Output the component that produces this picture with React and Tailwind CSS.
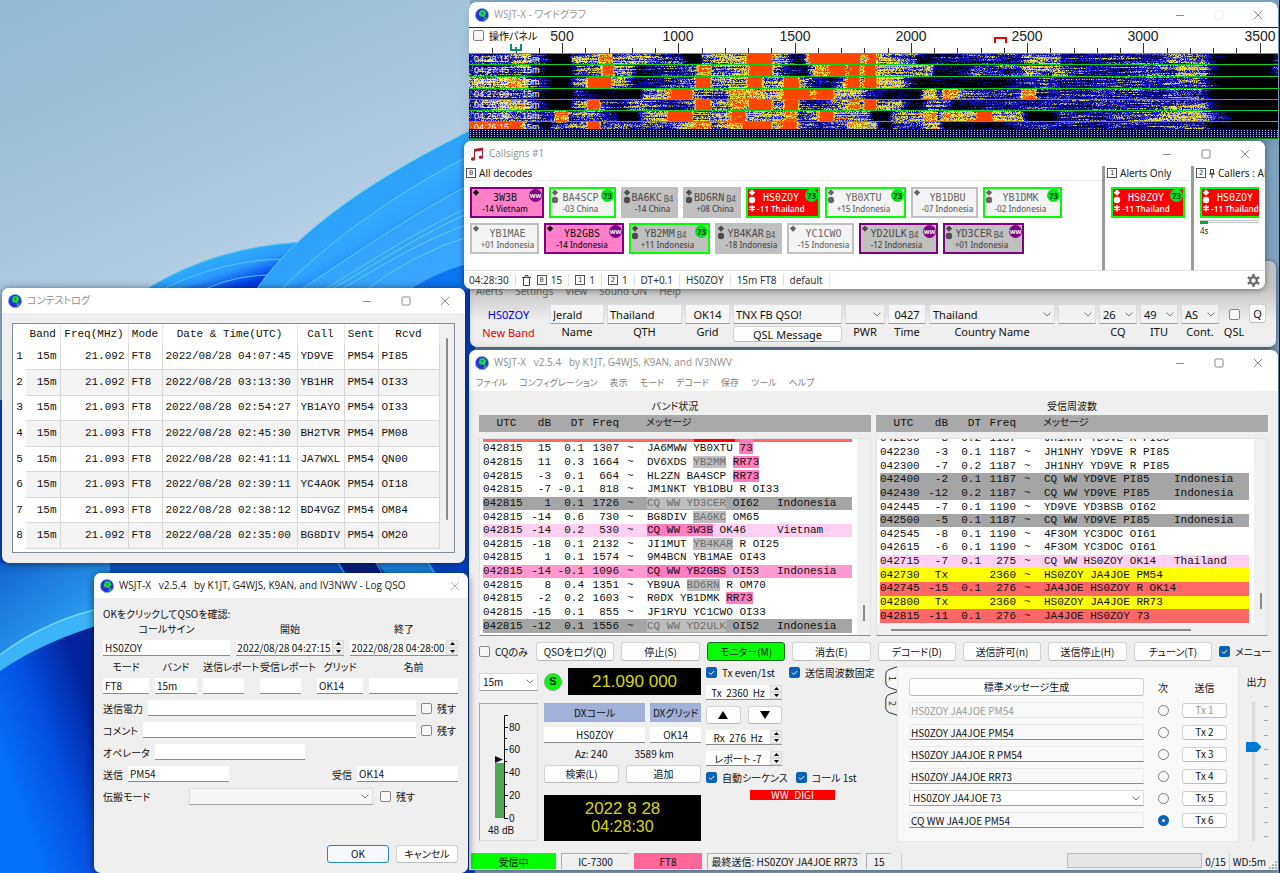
import React, { useId } from "react";

/* ---------- shared bits ---------- */

const Globe = () => (
  <svg className="size-[14px] shrink-0" viewBox="0 0 14 14" aria-hidden="true">
    <circle cx="7" cy="7" r="6.6" fill="#2a2ae8" />
    <circle cx="7" cy="7" r="6.6" fill="none" stroke="#7fa8f0" strokeWidth="0.8" />
    <path d="M4.6 3.2 6.5 2 9.8 2.6 11.4 5 10.4 7 9 9.4 7 8.4 5 8.6 3.8 6.4Z" fill="#18d83a" />
    <path d="M9.4 9.8 11.8 9 10.4 11.8 8.4 12.6Z" fill="#18d83a" />
    <path d="M1.6 7.4 3 9.6 4.4 10.8 3.2 11.2Z" fill="#0b6d6b" />
    <path d="M6.4 4.4 7.8 4 8.2 5.6 7 6.2Z" fill="#0b6d6b" />
  </svg>
);

const WindowButtons = ({ only, dimMax }) => (
  <div className="ml-auto flex self-stretch pr-px text-[#8c8c8c]">
    {!only && (
      <>
        <button aria-label="Minimize" className="flex w-[39px] items-center justify-center">
          <svg className="size-[10px]" viewBox="0 0 10 10">
            <path d="M1 5.5h8" stroke="currentColor" />
          </svg>
        </button>
        <button aria-label="Maximize" className="flex w-[39px] items-center justify-center">
          <svg className={dimMax ? "size-[10px] text-[#ececec]" : "size-[10px]"} viewBox="0 0 10 10">
            <rect x="1" y="1" width="8" height="8" rx="1" fill="none" stroke="currentColor" />
          </svg>
        </button>
      </>
    )}
    <button
      aria-label="Close"
      className={only ? "flex w-[24px] items-center justify-center text-[#b5b5b5]" : "flex w-[39px] items-center justify-center"}
    >
      <svg className="size-[10px]" viewBox="0 0 10 10">
        <path d="M.8.8l8.4 8.4M9.2.8.8 9.2" stroke="currentColor" fill="none" />
      </svg>
    </button>
  </div>
);

const TitleBar = ({ title, className, icon, ...rest }) => (
  <div
    className={`flex items-center gap-[5px] bg-white pl-[6px] font-['Open_Sans','Noto_Sans_CJK_JP',sans-serif] text-[10px] whitespace-pre ${className}`}
  >
    {icon || <Globe />}
    <span>{title}</span>
    <WindowButtons {...rest} />
  </div>
);

const Chevron = () => (
  <svg className="pointer-events-none absolute inset-y-0 right-[4px] my-auto h-[5px] w-[8px]" viewBox="0 0 8 5" fill="none">
    <path d="M.6.6 4 4 7.4.6" stroke="#777" />
  </svg>
);

const Select = ({ value, label, className, id }) => (
  <div className={`relative ${className}`}>
    <select
      id={id}
      aria-label={label}
      className="size-full appearance-none border border-[#dcdcdc] border-b-[#a0a0a0] bg-inherit pr-3 pl-[3px] leading-none"
    >
      <option>{value}</option>
    </select>
    <Chevron />
  </div>
);

const Check = ({ label, checked, className = "" }) => (
  <label className={`flex items-center gap-[5px] whitespace-nowrap ${className}`}>
    <span className="relative flex size-[11px] shrink-0">
      <input
        type="checkbox"
        aria-label={label || "QSL"}
        defaultChecked={checked}
        className="size-[11px] appearance-none rounded-[2px] border border-[#868686] bg-[#f7f7f7] checked:border-[#0a62b8] checked:bg-[#0a62b8]"
      />
      {checked && (
        <svg className="pointer-events-none absolute inset-0 size-[11px]" viewBox="0 0 11 11" fill="none">
          <path d="M3 5.6 4.8 7.4 8.2 4" stroke="#fff" />
        </svg>
      )}
    </span>
    {label}
  </label>
);

const SpinArrows = () => (
  <span className="flex w-[12px] shrink-0 flex-col border-b border-[#9a9a9a] bg-[#ededed]">
    <button aria-label="Up" className="flex flex-1 items-center justify-center border border-[#dadada]">
      <svg className="h-[3px] w-[5px]" viewBox="0 0 5 3">
        <path d="M0 3 2.5 0 5 3Z" />
      </svg>
    </button>
    <button aria-label="Down" className="flex flex-1 items-center justify-center border border-[#dadada]">
      <svg className="h-[3px] w-[5px]" viewBox="0 0 5 3">
        <path d="M0 0 2.5 3 5 0Z" />
      </svg>
    </button>
  </span>
);

const Spin = ({ value, label, className = "" }) => (
  <div className={`flex ${className}`}>
    <input
      aria-label={label}
      defaultValue={value}
      className="min-w-0 flex-1 border-b border-[#8a8a8a] bg-white text-center leading-none whitespace-pre"
    />
    <SpinArrows />
  </div>
);

const Btn = ({ children, className = "" }) => (
  <button
    className={`flex items-center justify-center rounded-[3px] border border-[#d2d2d2] border-b-[#bbb] bg-[#fdfdfd] leading-none whitespace-nowrap ${className}`}
  >
    {children}
  </button>
);

/* ---------- wallpaper ---------- */

const Wallpaper = () => (
  <svg className="absolute inset-0 size-full" viewBox="0 0 1280 873" preserveAspectRatio="xMinYMin slice" aria-hidden="true">
    <defs>
      <linearGradient id="sky" x1="0" y1="0" x2="0.25" y2="0.4">
        <stop offset="0" stopColor="#92b8d2" />
        <stop offset="0.5" stopColor="#a6c6dd" />
        <stop offset="1" stopColor="#c3d6e9" />
      </linearGradient>
      <linearGradient id="petal" x1="300" y1="150" x2="400" y2="290" gradientUnits="userSpaceOnUse">
        <stop offset="0" stopColor="#22a0f5" />
        <stop offset="1" stopColor="#3aa5ff" />
      </linearGradient>
      <linearGradient id="fold" x1="380" y1="190" x2="415" y2="250" gradientUnits="userSpaceOnUse">
        <stop offset="0" stopColor="#3aadff" />
        <stop offset="0.5" stopColor="#2fa2fe" />
        <stop offset="1" stopColor="#1370f3" />
      </linearGradient>
      <linearGradient id="back" x1="240" y1="245" x2="255" y2="290" gradientUnits="userSpaceOnUse">
        <stop offset="0" stopColor="#2fb2f8" />
        <stop offset="0.45" stopColor="#2a98fc" />
        <stop offset="0.8" stopColor="#0440ea" />
        <stop offset="1" stopColor="#0433d8" />
      </linearGradient>
      <linearGradient id="deep" x1="0" y1="760" x2="110" y2="720" gradientUnits="userSpaceOnUse">
        <stop offset="0" stopColor="#0572fb" />
        <stop offset="0.45" stopColor="#0350e0" />
        <stop offset="0.9" stopColor="#02239c" />
      </linearGradient>
      <linearGradient id="leaf" x1="0" y1="565" x2="60" y2="640" gradientUnits="userSpaceOnUse">
        <stop offset="0" stopColor="#1266cf" />
        <stop offset="1" stopColor="#2b9df2" />
      </linearGradient>
      <linearGradient id="steel" x1="0" y1="0" x2="0" y2="1">
        <stop offset="0" stopColor="#7ba2bf" />
        <stop offset="1" stopColor="#7f9db8" />
      </linearGradient>
    </defs>
    <rect width="1280" height="873" fill="url(#sky)" />
    <rect x="470" width="810" height="873" fill="url(#steel)" />
    <path d="M145 290Q215 246 305 242L330 290Z" fill="url(#back)" />
    <path d="M145 290Q215 246 305 242M165 288Q225 259 288 259M207 288Q240 274 275 275" fill="none" stroke="#54c6fb" />
    <path d="M256 290C300 226 380 175 475 128V290Z" fill="url(#petal)" />
    <path d="M281 290C330 240 400 190 475 153V290Z" fill="url(#fold)" />
    <path d="M300 290C340 264 410 215 475 182V290Z" fill="url(#petal)" />
    <path d="M410 290Q435 272 475 262V290Z" fill="#0c74ee" />
    <path
      d="M256 290C300 226 380 175 475 128M281 290C330 240 400 190 475 153M300 290C340 264 410 215 475 182M324 290C370 262 400 240 475 204M330 290C380 262 410 240 475 210M340 290C385 264 425 238 475 222M366 290Q410 255 475 234"
      fill="none"
      stroke="#58d4fb"
    />
    <rect y="290" width="475" height="583" fill="#0546cf" />
    <rect y="290" width="6" height="110" fill="#9fc0de" />
    <path d="M0 563H110V620L0 665Z" fill="url(#leaf)" />
    <path d="M0 655Q45 620 110 606V873H0Z" fill="#3bb4fb" />
    <path d="M0 671Q45 640 110 622V873H0Z" fill="url(#deep)" />
    <path d="M0 655Q45 620 110 606" fill="none" stroke="#6fdcff" strokeWidth="1.5" />
    <path d="M110 563H340L350 580H110Z" fill="#0d55c8" />
    <path d="M340 563H376L390 580H350Z" fill="#0a1f86" />
    <path d="M376 563H430L440 580H392Z" fill="#1c86ea" />
    <path d="M338 563 346 576M376 563 384 576M428 563 436 576" stroke="#5cc4fa" />
    <path d="M1279.5 0V873" stroke="#0b0f14" />
  </svg>
);

/* ---------- wide graph ---------- */

// Signal strength along x for each 15 s period, 0 = noise floor, 1 = saturated
const BANDS = [
  { y0: 26, y1: 36, t: "04:28:15", p: [0,.4,38,.42,45,.58,56,.58,62,.4,76,.3,82,.04,100,.04,103,.5,128,.55,131,.82,142,.82,144,.55,180,.56,190,.42,212,.36,218,.1,230,.1,233,.48,270,.62,277,.78,279,1,301,1,304,.62,318,.46,325,.2,333,.2,340,.86,342,.97,390,.95,393,.66,401,.93,406,.93,408,.62,445,.48,450,.2,480,.3,500,.38,550,.38,556,.52,590,.52,592,.36,690,.38,705,.48,735,.48,745,.2,760,.02,800,.02,806,.35] },
  { y0: 37, y1: 48, t: "04:27:45", p: [0,.4,38,.42,45,.52,56,.52,62,.4,74,.2,80,.04,100,.04,106,.46,130,.54,134,.88,143,.88,146,.56,160,.6,170,.2,190,.33,225,.46,230,.82,240,.82,243,.52,278,.62,281,.95,302,.95,305,.56,320,.3,335,.2,344,.56,347,.8,358,.8,362,.96,375,.96,378,.62,380,.9,389,.9,392,.54,396,.95,405,.95,408,.62,462,.58,466,.15,490,.2,510,.38,550,.4,556,.56,590,.56,600,.4,640,.4,700,.46,710,.56,735,.56,742,.3,755,.02,800,.02,806,.3] },
  { y0: 49, y1: 60, t: "04:27:15", p: [0,.6,30,.62,40,.7,55,.7,60,.4,78,.3,84,.06,100,.06,104,.44,116,.54,119,.95,141,.95,144,.6,156,.54,166,.2,190,.34,224,.5,227,.97,240,.97,243,.54,276,.58,279,1,291,1,295,.54,313,.56,315,.98,328,.98,331,.54,345,.34,360,.22,374,.54,379,.94,389,.94,392,.46,396,.98,406,.98,408,.62,430,.66,440,.38,452,.12,530,.14,550,.38,600,.4,690,.42,705,.52,730,.52,745,.2,756,.02,806,.02] },
  { y0: 61, y1: 71, t: "04:27:00", p: [0,.4,36,.4,44,.48,60,.4,72,.15,80,.04,100,.04,108,.34,130,.16,170,.06,174,.46,196,.62,204,.96,222,.96,225,.6,255,.4,263,.74,285,.74,300,.54,313,.7,315,.98,338,1,341,.76,350,.92,363,.98,366,.62,390,.56,402,.3,420,.08,450,.08,455,.7,465,.7,470,.38,476,.84,485,.8,492,.5,520,.34,550,.38,554,.84,565,.84,568,.38,690,.38,705,.47,730,.47,745,.1,755,.02,806,.02] },
  { y0: 72, y1: 82, t: "04:26:45", p: [0,.42,40,.6,55,.6,60,.4,76,.2,82,.04,100,.04,104,.42,116,.52,119,.9,129,.9,132,.48,150,.28,168,.54,180,.46,200,.35,224,.5,227,.98,240,.98,243,.5,260,.54,263,.84,272,.84,278,.66,280,.98,301,.98,304,.54,313,.56,316,.96,328,.96,331,.46,350,.3,376,.54,380,.84,389,.84,392,.46,396,.95,406,.95,408,.56,430,.56,440,.14,452,.1,458,.46,480,.4,485,.14,530,.28,560,.38,690,.4,705,.5,730,.5,742,.2,756,.02,806,.02] },
  { y0: 83, y1: 93, t: "04:26:30", p: [0,.4,40,.48,60,.42,84,.4,87,.86,98,.86,100,.42,120,.5,146,.3,150,.04,166,.04,174,.5,196,.62,199,.95,222,.95,225,.56,255,.5,263,.9,275,.9,278,.58,313,.56,317,.82,325,.82,330,.38,346,.58,352,.98,363,.98,366,.62,398,.56,405,.08,418,.08,424,.5,452,.54,455,.8,466,.8,469,.38,476,.8,482,.64,506,.68,509,1,521,1,524,.64,552,.56,560,.06,582,.06,592,.38,650,.44,690,.55,735,.6,748,.35,765,.02,806,.02] },
  { y0: 94, y1: 101, t: "04:26:15", p: [0,.88,50,.9,56,.5,62,.3,78,.08,84,.46,116,.54,119,.98,129,.98,132,.46,160,.54,200,.4,227,.82,240,.82,243,.46,263,.84,272,.84,279,.96,301,.96,304,.54,316,.95,326,.95,330,.46,350,.3,376,.54,380,.82,389,.78,396,.8,406,.66,410,.3,420,.1,425,.46,452,.5,458,.62,468,.62,475,.1,530,.14,545,.34,690,.38,705,.46,730,.46,745,.1,806,.02] },
];

const SHADES = ["#00003c", "#0a0a8c", "#1414dc", "#5a5ab4", "#b4b450", "#e6e63c", "#ffa014", "#ff4600"];

const shadeOf = (v) => {
  if (v < 0.16) return -1;
  if (v < 0.27) return 0;
  if (v < 0.38) return 1;
  if (v < 0.48) return 2;
  if (v < 0.55) return 3;
  if (v < 0.63) return 4;
  if (v < 0.78) return 5;
  if (v < 0.84) return 6;
  return 7;
};

const buildWaterfall = () => {
  let seed = 90210;
  const rnd = () => {
    seed = (seed * 1664525 + 1013904223) >>> 0;
    return seed / 4294967296;
  };
  const paths = SHADES.map(() => []);
  BANDS.forEach(({ y0, y1, p }) => {
    for (let y = y0; y < y1; y++) {
      let seg = 0;
      let from = 0;
      let to = 0;
      let run = -1;
      let start = 0;
      for (let x = 0; x <= 812; x++) {
        while (seg + 3 < p.length - 1 && p[seg + 2] < x) seg += 2;
        const span = p[seg + 2] - p[seg] || 1;
        const k = Math.min(1, (x - p[seg]) / span);
        const base = p[seg + 1] + (p[seg + 3] - p[seg + 1]) * k;
        if (x % 18 === 0) {
          from = to;
          to = (rnd() - 0.5) * 0.36;
        }
        const streak = from + ((to - from) * (x % 18)) / 18;
        const soft = base > 0.86 ? 0.3 : base < 0.08 ? 0.5 : 1;
        const s = x === 812 ? -2 : shadeOf(base + (streak + (rnd() - 0.5) * 0.32) * soft);
        if (s !== run) {
          if (run >= 0) paths[run].push(`M${start} ${y + 0.5}h${x - start}`);
          run = s;
          start = x;
        }
      }
    }
  });
  return paths.map((d) => d.join(""));
};

const WATERFALL = buildWaterfall();
const hz = (f) => Math.round(93 + (f - 500) * 0.2325);
const TICKS = Array.from({ length: 34 }, (_, i) => 200 + i * 100);

const WideGraph = () => (
  <section className="absolute top-[2px] right-[2px] left-[469px] overflow-hidden rounded-t-[7px] bg-black shadow-lg">
    <TitleBar title="WSJT-X - ワイドグラフ" dimMax className="h-[25px] text-[#9a9a9a]" />
    <div className="relative border-t border-[#222]">
      <svg className="block h-[111px] w-full" shapeRendering="crispEdges">
        <defs>
          <pattern id="dots" width="3" height="2" patternUnits="userSpaceOnUse">
            <rect width="3" height="2" fill="#0a0a50" />
            <rect x="1" width="1" height="1" fill="#c4c4d8" />
          </pattern>
        </defs>
        <rect width="100%" height="25" fill="#fff" />
        {TICKS.map((f) => (
          <path key={f} d={`M${hz(f) + 0.5} ${f % 500 ? 20 : 15}V25`} stroke="#333" />
        ))}
        {[500, 1000, 1500, 2000, 2500, 3000, 3500].map((f) => (
          <text
            key={f}
            x={hz(f)}
            y="13"
            textAnchor="middle"
            fontSize="14"
            fill="#222"
            className="font-['Liberation_Sans',sans-serif]"
          >
            {f}
          </text>
        ))}
        <path d="M42 16v6h10v-6M47 22v-3" fill="none" stroke="#0b9068" strokeWidth="2" />
        <path d="M526 15v-5h11v5" fill="none" stroke="#f00000" strokeWidth="2" />
        {WATERFALL.map((d, i) => (
          <path key={i} d={d} stroke={SHADES[i]} />
        ))}
        {BANDS.map((b) => (
          <path key={b.t} d={`M0 ${b.y0 - 0.5}H1280`} stroke="#0fd21e" />
        ))}
        <g fontSize="9" fill="#fff" className="font-['Liberation_Sans',sans-serif]">
          {BANDS.map((b) => (
            <g key={b.t}>
              <text x="5" y={b.y0 + 8}>{b.t}</text>
              <text x="53" y={b.y0 + 8}>15m</text>
            </g>
          ))}
        </g>
        <rect y="101" width="100%" height="10" fill="url(#dots)" />
        <path d="M0 110.5H1280" stroke="#0a8a14" />
      </svg>
      <Check label="操作パネル" className="absolute top-0 left-[4px] h-[14px] text-[10px]" />
    </div>
  </section>
);

/* ---------- callsigns ---------- */

const CHIP_STYLES = {
  plain: "border-[#c0c0c0] bg-[#f4f4f4] text-[#666]",
  green: "border-[#00ff00] bg-[#f4f4f4] text-[#666]",
  gray: "border-[#c0c0c0] bg-[#c0c0c0] text-[#4c4c4c]",
  grayGreen: "border-[#00ff00] bg-[#c0c0c0] text-[#4c4c4c]",
  grayPurple: "border-[#800080] bg-[#c0c0c0] text-[#4c4c4c]",
  pink: "border-[#800080] bg-[#ff80c8] text-[#111]",
  red: "border-[#00ff00] bg-[#ff0000] text-white",
};

const ROW_1 = [
  { call: "3W3B", info: "-14 Vietnam", w: "w-[74px]", kind: "pink", badge: "WW", marks: 1 },
  { call: "BA4SCP", info: "-03 China", w: "w-[67px]", kind: "green", badge: "73", marks: 2 },
  { call: "BA6KC", b4: true, info: "-14 China", w: "w-[57px]", kind: "gray", marks: 2 },
  { call: "BD6RN", b4: true, info: "+08 China", w: "w-[58px]", kind: "gray", marks: 2 },
  { call: "HS0ZOY", info: "-11 Thailand", w: "w-[74px]", kind: "red", badge: "73", marks: 3 },
  { call: "YB0XTU", info: "+15 Indonesia", w: "w-[81px]", kind: "green", badge: "73", marks: 2 },
  { call: "YB1DBU", info: "-07 Indonesia", w: "w-[67px]", kind: "plain", marks: 1 },
  { call: "YB1DMK", info: "-02 Indonesia", w: "w-[79px]", kind: "green", badge: "73", marks: 2 },
];

const ROW_2 = [
  { call: "YB1MAE", info: "+01 Indonesia", w: "w-[69px]", kind: "plain", marks: 1 },
  { call: "YB2GBS", info: "-14 Indonesia", w: "w-[80px]", kind: "pink", badge: "WW", marks: 1 },
  { call: "YB2MM", b4: true, info: "+11 Indonesia", w: "w-[81px]", kind: "grayGreen", badge: "73", marks: 2 },
  { call: "YB4KAR", b4: true, info: "-18 Indonesia", w: "w-[67px]", kind: "gray", marks: 2 },
  { call: "YC1CWO", info: "-15 Indonesia", w: "w-[67px]", kind: "plain", marks: 1 },
  { call: "YD2ULK", b4: true, info: "-12 Indonesia", w: "w-[79px]", kind: "grayPurple", badge: "WW", marks: 1 },
  { call: "YD3CER", b4: true, info: "+01 Indonesia", w: "w-[81px]", kind: "grayPurple", badge: "WW", marks: 2 },
];

const Chip = ({ call, info, w, kind, badge, marks, b4, hideBadge }) => (
  <button
    className={`relative flex h-[31px] shrink-0 flex-col items-center justify-center gap-[2px] border-2 leading-none whitespace-nowrap ${
      badge ? "pr-[4px]" : "pl-[6px]"
    } ${w} ${CHIP_STYLES[kind]}`}
  >
    <svg className="absolute top-0 left-0 h-[27px] w-[8px]" viewBox="0 0 8 27" fill="currentColor">
      <path d="M4 .4 7.2 3.6 4 6.8.8 3.6Z" />
      {marks > 1 && <circle cx="4" cy="11" r="3.2" />}
      {marks > 2 && (
        <path d="M4 16v6.400M1.2 17.600l5.600 3.200M6.800 17.600l-5.600 3.200" stroke="currentColor" strokeWidth="1.6" />
      )}
    </svg>
    <span className={badge && b4 ? "flex items-end gap-[2px] pr-[4px]" : "flex items-end gap-[2px]"}>
      <span className="font-['DejaVu_Sans_Mono',monospace] text-[10px]">{call}</span>
      {b4 && <span className="font-['Noto_Sans',sans-serif] text-[8px]">B4</span>}
    </span>
    <span className={`font-['Noto_Sans',sans-serif] text-[8px] ${kind === "red" ? "font-semibold" : "font-medium"}`}>
      {info}
    </span>
    {badge && !hideBadge && (
      <span
        className={`absolute top-0 right-0 flex size-[13px] items-center justify-center rounded-full font-['Noto_Sans',sans-serif] font-bold ${
          badge === "73" ? "bg-[#00e61e] text-[8px] text-[#053a05]" : "bg-[#800080] text-[6px] text-white"
        }`}
      >
        {badge}
      </span>
    )}
  </button>
);

const BoxedNum = ({ n }) => (
  <span className="flex size-[10px] shrink-0 items-center justify-center border border-[#555] font-['DejaVu_Sans_Mono',monospace] text-[7px] leading-none text-[#333]">
    {n}
  </span>
);

const PaneHead = ({ n, children }) => (
  <h2 className="flex h-[15px] items-center gap-[3px] border-b border-[#ececec] pl-[2px] whitespace-nowrap">
    <BoxedNum n={n} />
    {children}
  </h2>
);

const MusicNotes = () => (
  <svg className="size-[14px]" viewBox="0 0 14 14" fill="#b01c30">
    <path d="M4 2 13 .5V10H12V3.5L5 4.8V12H4Z" />
    <ellipse cx="3" cy="12" rx="2.2" ry="1.7" />
    <ellipse cx="11" cy="10.2" rx="2.2" ry="1.7" />
  </svg>
);

const Trash = () => (
  <svg className="h-[11px] w-[9px]" viewBox="0 0 9 11" fill="none" stroke="#444">
    <path d="M0 2.5h9M3 2V.5h3V2M1.5 3v7.5h6V3" />
  </svg>
);

const Gear = () => (
  <svg className="size-[13px]" viewBox="0 0 14 14" fill="none" stroke="#666">
    <circle cx="7" cy="7" r="3.6" strokeWidth="2.4" />
    <path d="M7 0v2.400M7 11.600V14M.9 3.500l2.100 1.200M11 9.300l2.100 1.200M.9 10.500 3 9.300M11 4.700l2.100-1.200" strokeWidth="2.6" />
  </svg>
);

const Stat = ({ n, children }) => (
  <span className="flex h-[12px] items-center gap-[4px] border-r border-[#dedede] pr-[6px]">
    {n !== undefined && <BoxedNum n={n} />}
    {children}
  </span>
);

const Callsigns = () => (
  <section className="absolute top-[141px] right-[15px] left-[464px] overflow-hidden rounded-[7px] bg-white shadow-[0_1px_6px_rgba(0,0,0,0.45)]">
    <TitleBar title="Callsigns #1" icon={<MusicNotes />} className="h-[25px] text-[#8f8f8f]" />
    <div className="flex h-[104px] font-['Noto_Sans',sans-serif] text-[10px] text-[#222]">
      <div className="min-w-0 flex-1">
        <PaneHead n="0">All decodes</PaneHead>
        <div className="flex flex-col gap-[5px] overflow-hidden py-[6px] pl-[6px]">
          <div className="flex gap-[5px]">
            {ROW_1.map((c) => (
              <Chip key={c.call} {...c} />
            ))}
          </div>
          <div className="flex gap-[5px]">
            {ROW_2.map((c) => (
              <Chip key={c.call} {...c} />
            ))}
          </div>
        </div>
      </div>
      <div className="w-[3px] bg-[#999]" />
      <div className="w-[86px]">
        <PaneHead n="1">Alerts Only</PaneHead>
        <div className="py-[6px] pl-[6px]">
          <Chip {...ROW_1[4]} />
        </div>
      </div>
      <div className="w-[3px] bg-[#999]" />
      <div className="w-[71px] overflow-hidden">
        <PaneHead n="2">
          <svg className="h-[9px] w-[6px] shrink-0" viewBox="0 0 6 9" fill="none" stroke="#333">
            <path d="M1.5.5h3v4h-3zM0 5h6M3 5v4" />
          </svg>
          Callers : Al
        </PaneHead>
        <div className="mr-[6px] overflow-hidden pt-[6px] pl-[6px]">
          <Chip {...ROW_1[4]} hideBadge />
          <div className="mt-[2px] h-[3px] border-y border-[#c8c8c8]">
            <div className="h-[3px] w-[8px] bg-[#10a030]" />
          </div>
          <span className="text-[8px] leading-none">4s</span>
        </div>
      </div>
    </div>
    <footer className="flex h-[19px] items-center gap-[6px] border-t border-[#e2e2e2] pr-[5px] pl-[5px] font-['Noto_Sans',sans-serif] text-[10px] text-[#333]">
      <Stat>04:28:30</Stat>
      <button aria-label="Clear">
        <Trash />
      </button>
      <Stat n="0">15</Stat>
      <Stat n="1">1</Stat>
      <Stat n="2">1</Stat>
      <Stat>DT+0.1</Stat>
      <Stat>HS0ZOY</Stat>
      <Stat>15m FT8</Stat>
      <Stat>default</Stat>
      <button aria-label="Settings" className="ml-auto">
        <Gear />
      </button>
    </footer>
  </section>
);

/* ---------- alert window (behind callsigns) ---------- */

const AlertField = ({ label, value, select, className, center }) => {
  const id = useId();
  return (
    <div className={`flex flex-col items-center gap-[2px] ${className}`}>
      {select ? (
        <Select id={id} value={value} label={label || "Prefix"} className="h-[20px] w-full bg-[#f2f2f2] text-[11px]" />
      ) : (
        <input
          id={id}
          defaultValue={value}
          aria-label={label || "Comment"}
          className={`h-[20px] w-full border border-[#dedede] border-b-[#999] bg-[#f6f6f6] px-[2px] ${center ? "text-center" : ""}`}
        />
      )}
      {label && (
        <label htmlFor={id} className="leading-none whitespace-nowrap">
          {label}
        </label>
      )}
    </div>
  );
};

const AlertWindow = () => (
  <section className="absolute top-[261px] right-[4px] left-[470px] rounded-[7px] bg-linear-to-b from-[#c4c4c4] from-30% to-[#efefef] to-70% pt-[23px] font-['Noto_Sans',sans-serif] text-[11px] text-[#111] shadow-[0_1px_5px_rgba(0,0,0,0.5)]">
    <nav className="flex gap-[12px] pl-[6px] text-[10px] leading-[14px] text-[#666]">
      {["Alerts", "Settings", "View", "Sound ON", "Help"].map((m) => (
        <button key={m}>{m}</button>
      ))}
    </nav>
    <div className="flex gap-[3px] pt-[6px] pr-[10px] pb-[5px] leading-none">
      <div className="flex w-[77px] flex-col items-center gap-[7px] pt-[5px]">
        <span className="text-[#0000ee]">HS0ZOY</span>
        <span className="whitespace-nowrap text-[#ee0000]">New Band</span>
      </div>
      <AlertField label="Name" value="Jerald" className="w-[54px]" />
      <AlertField label="QTH" value="Thailand" className="w-[75px]" />
      <AlertField label="Grid" value="OK14" center className="w-[45px]" />
      <div className="flex w-[109px] flex-col gap-[2px]">
        <AlertField value="TNX FB QSO!" />
        <Btn className="h-[16px]">QSL Message</Btn>
      </div>
      <AlertField label="PWR" value="" select className="w-[40px]" />
      <AlertField label="Time" value="0427" center className="w-[38px]" />
      <AlertField label="Country Name" value="Thailand" select className="min-w-0 flex-1" />
      <AlertField value="" select className="w-[38px]" />
      <AlertField label="CQ" value="26" select className="w-[38px]" />
      <AlertField label="ITU" value="49" select className="w-[38px]" />
      <AlertField label="Cont." value="AS" select className="w-[38px]" />
      <div className="flex w-[24px] flex-col items-center gap-[7px] pt-[5px]">
        <Check className="h-[10px]" />
        <span>QSL</span>
      </div>
      <Btn className="h-[19px] w-[17px]">Q</Btn>
    </div>
  </section>
);

/* ---------- contest log ---------- */

const LOG = [
  ["21.092", "2022/08/28 04:07:45", "YD9VE", "PI85"],
  ["21.092", "2022/08/28 03:13:30", "YB1HR", "OI33"],
  ["21.093", "2022/08/28 02:54:27", "YB1AYO", "OI33"],
  ["21.093", "2022/08/28 02:45:30", "BH2TVR", "PM08"],
  ["21.093", "2022/08/28 02:41:11", "JA7WXL", "QN00"],
  ["21.093", "2022/08/28 02:39:11", "YC4AOK", "OI18"],
  ["21.093", "2022/08/28 02:38:12", "BD4VGZ", "OM84"],
  ["21.092", "2022/08/28 02:35:00", "BG8DIV", "OM20"],
];

const ContestLog = () => (
  <section className="absolute top-[288px] left-[2px] w-[463px] overflow-hidden rounded-[7px] bg-[#efefef] shadow-[0_1px_8px_rgba(0,0,0,0.55)]">
    <TitleBar title="コンテストログ" className="h-[25px] text-[#8f8f8f]" />
    <div className="mx-[10px] mt-[10px] mb-[10px] flex h-[230px] overflow-hidden border border-[#828a94] bg-white">
      <table className="h-[225px] table-fixed self-start font-['Liberation_Mono',monospace] text-[11px] leading-none whitespace-nowrap text-[#111]">
        <colgroup>
          <col className="w-[13px]" />
          <col className="w-[34px]" />
          <col className="w-[68px]" />
          <col className="w-[34px]" />
          <col className="w-[135px]" />
          <col className="w-[47px]" />
          <col className="w-[34px]" />
          <col className="w-[61px]" />
        </colgroup>
        <thead>
          <tr className="h-[20px]">
            <th />
            {["Band", "Freq(MHz)", "Mode", "Date & Time(UTC)", "Call", "Sent", "Rcvd"].map((h) => (
              <th key={h} className="border-r border-[#e6e6e6] p-0 font-normal">
                {h}
              </th>
            ))}
          </tr>
        </thead>
        <tbody>
          {LOG.map(([freq, date, call, rcvd], i) => (
            <tr key={date} className="h-[25px] even:bg-[#f4f4f4]">
              <th className="bg-white p-0 text-center font-normal">{i + 1}</th>
              <td className="border-r border-b border-[#d8d8d8] pr-[3px] text-right">15m</td>
              <td className="border-r border-b border-[#d8d8d8] pr-[3px] text-right">{freq}</td>
              <td className="border-r border-b border-[#d8d8d8] pl-[3px]">FT8</td>
              <td className="border-r border-b border-[#d8d8d8] pl-[3px]">{date}</td>
              <td className="border-r border-b border-[#d8d8d8] pl-[3px]">{call}</td>
              <td className="border-r border-b border-[#d8d8d8] pl-[3px]">PM54</td>
              <td className="border-r border-b border-[#d8d8d8] pl-[3px]">{rcvd}</td>
            </tr>
          ))}
        </tbody>
      </table>
      <div className="flex flex-1 justify-center bg-[#f0f0f0] pt-[14px]">
        <div className="h-[182px] w-[2px] rounded-full bg-[#8a8a8a]" />
      </div>
    </div>
  </section>
);

/* ---------- log QSO dialog ---------- */

const BOX = "h-[16px] min-w-0 border-b border-[#8a8a8a] bg-white px-[2px] leading-none";

const Stacked = ({ label, value, className, inputClass = "w-full" }) => {
  const id = useId();
  return (
    <div className={`flex flex-col gap-[5px] ${className}`}>
      <label htmlFor={id} className="text-center leading-[12px] whitespace-nowrap">
        {label}
      </label>
      <input id={id} defaultValue={value} className={`${BOX} ${inputClass}`} />
    </div>
  );
};

const Inline = ({ label, value, className, children }) => {
  const id = useId();
  return (
    <div className="flex h-[16px] items-center gap-[5px]">
      <label htmlFor={id} className="whitespace-nowrap">
        {label}
      </label>
      <input id={id} defaultValue={value} className={`${BOX} ${className}`} />
      {children}
    </div>
  );
};

const LogQso = () => {
  const modeId = useId();
  return (
    <section className="absolute top-[573px] left-[94px] flex h-[300px] w-[374px] flex-col overflow-hidden rounded-[7px] bg-[#efefef] text-[10px] text-[#111] shadow-[0_1px_8px_rgba(0,0,0,0.6)]">
      <TitleBar
        title="WSJT-X   v2.5.4   by K1JT, G4WJS, K9AN, and IV3NWV - Log QSO"
        only
        className="h-[25px] text-[#222]"
      />
      <div className="flex flex-1 flex-col gap-[6px] pt-[8px] pr-[10px] pb-[10px] pl-[9px]">
        <div>
          <p className="leading-[15px]">OKをクリックしてQSOを確認:</p>
          <div className="mt-[2px] flex gap-[6px]">
            <Stacked label="コールサイン" value="HS0ZOY" className="w-[127px] shrink-0" />
            <div className="flex min-w-0 flex-1 flex-col gap-[5px] text-center">
              <span className="leading-[12px]">開始</span>
              <Spin label="開始" value="2022/08/28 04:27:15" className="h-[16px]" />
            </div>
            <div className="flex min-w-0 flex-1 flex-col gap-[5px] text-center">
              <span className="leading-[12px]">終了</span>
              <Spin label="終了" value="2022/08/28 04:28:00" className="h-[16px]" />
            </div>
          </div>
          <div className="mt-[5px] flex gap-[6px]">
            <Stacked label="モード" value="FT8" className="w-[46px]" />
            <Stacked label="バンド" value="15m" className="w-[42px]" />
            <Stacked label="送信レポート" className="w-[51px]" inputClass="w-[41px]" />
            <Stacked label="受信レポート" className="w-[51px]" inputClass="w-[41px]" />
            <Stacked label="グリッド" value="OK14" className="w-[46px]" />
            <Stacked label="名前" className="min-w-0 flex-1" />
          </div>
        </div>
        <Inline label="送信電力" className="flex-1">
          <Check label="残す" className="pr-[2px]" />
        </Inline>
        <Inline label="コメント" className="flex-1">
          <Check label="残す" className="pr-[2px]" />
        </Inline>
        <Inline label="オペレータ" className="w-[150px]" />
        <div className="flex justify-between">
          <Inline label="送信" value="PM54" className="w-[101px]" />
          <Inline label="受信" value="OK14" className="w-[101px]" />
        </div>
        <div className="flex h-[17px] items-center gap-[7px]">
          <label htmlFor={modeId} className="w-[79px]">
            伝搬モード
          </label>
          <Select id={modeId} value="" label="伝搬モード" className="h-[17px] w-[184px] bg-[#f7f7f7]" />
          <Check label="残す" />
        </div>
        <div className="mt-auto flex justify-end gap-[7px]">
          <Btn className="h-[18px] w-[62px] border-[#2a83d2]! bg-[#f5f9fd]!">OK</Btn>
          <Btn className="h-[18px] w-[62px]">キャンセル</Btn>
        </div>
      </div>
    </section>
  );
};

/* ---------- main window ---------- */

const DIM = "bg-[#bebebe] text-[#6c6c6c]";
const HOT = "bg-[#ff7cc0]";

const BAND_ROWS = [
  ["042815", "15", "0.1", "1307", ["JA6MWW YB0XTU ", ["73", HOT]]],
  ["042815", "11", "0.3", "1664", ["DV6XDS ", ["YB2MM", DIM], " ", ["RR73", HOT]]],
  ["042815", "-3", "0.1", "664", ["HL2ZN BA4SCP ", ["RR73", HOT]]],
  ["042815", "-7", "-0.1", "818", ["JM1NKT YB1DBU R OI33"]],
  ["042815", "1", "0.1", "1726", [["CQ WW YD3CER", DIM], " OI62"], "Indonesia", "bg-[#a5a5a5]"],
  ["042815", "-14", "0.6", "730", ["BG8DIV ", ["BA6KC", DIM], " OM65"]],
  ["042815", "-14", "0.2", "530", [["CQ WW 3W3B", HOT], " OK46"], "Vietnam", "bg-[#ffd0f2]"],
  ["042815", "-18", "0.1", "2132", ["JI1MUT ", ["YB4KAR", DIM], " R OI25"]],
  ["042815", "1", "0.1", "1574", ["9M4BCN YB1MAE OI43"]],
  ["042815", "-14", "-0.1", "1096", [["CQ WW YB2GBS", HOT], " OI53"], "Indonesia", "bg-[#ff9ad0]"],
  ["042815", "8", "0.4", "1351", ["YB9UA ", ["BD6RN", DIM], " R OM70"]],
  ["042815", "-2", "0.2", "1603", ["R0DX YB1DMK ", ["RR73", HOT]]],
  ["042815", "-15", "0.1", "855", ["JF1RYU YC1CWO OI33"]],
  ["042815", "-12", "0.1", "1556", [["CQ WW YD2ULK", DIM], " OI52"], "Indonesia", "bg-[#a5a5a5]"],
];

const RX_ROWS = [
  ["042200", "-8", "0.2", "1187", ["JH1NHY YD9VE R PI85"]],
  ["042230", "-3", "0.1", "1187", ["JH1NHY YD9VE R PI85"]],
  ["042300", "-7", "0.2", "1187", ["JH1NHY YD9VE R PI85"]],
  ["042400", "-2", "0.1", "1187", ["CQ WW YD9VE PI85"], "Indonesia", "bg-[#a5a5a5]"],
  ["042430", "-12", "0.2", "1187", ["CQ WW YD9VE PI85"], "Indonesia", "bg-[#a5a5a5]"],
  ["042445", "-7", "0.1", "1190", ["YD9VE YD3BSB OI62"]],
  ["042500", "-5", "0.1", "1187", ["CQ WW YD9VE PI85"], "Indonesia", "bg-[#a5a5a5]"],
  ["042545", "-8", "0.1", "1190", ["4F3OM YC3DOC OI61"]],
  ["042615", "-6", "0.1", "1190", ["4F3OM YC3DOC OI61"]],
  ["042715", "-7", "0.1", "275", ["CQ WW HS0ZOY OK14"], "Thailand", "bg-[#ffd0f2]"],
  ["042730", "Tx", "", "2360", ["HS0ZOY JA4JOE PM54"], "", "bg-[#ffff00]"],
  ["042745", "-15", "0.1", "276", ["JA4JOE HS0ZOY R OK14"], "", "bg-[#ff6666]"],
  ["042800", "Tx", "", "2360", ["HS0ZOY JA4JOE RR73"], "", "bg-[#ffff00]"],
  ["042815", "-11", "0.1", "276", ["JA4JOE HS0ZOY 73"], "", "bg-[#ff6666]"],
];

const Cols = () => (
  <colgroup>
    <col className="w-[40px]" />
    <col className="w-[28px]" />
    <col className="w-[33px]" />
    <col className="w-[35px]" />
    <col className="w-[28px]" />
    <col className="w-[130px]" />
    <col />
  </colgroup>
);

const Decodes = ({ rows, className }) => (
  <table
    className={`w-full table-fixed font-['Liberation_Mono',monospace] text-[11px] leading-none whitespace-pre text-[#111] ${className}`}
  >
    <Cols />
    <tbody>
      {rows.map(([utc, db, dt, freq, msg, country, bg], i) => (
        <tr key={i} className={bg}>
          <td className="p-0">{utc}</td>
          <td className="p-0 text-right">{db}</td>
          <td className="p-0 text-right">{dt}</td>
          <td className="p-0 text-right">{freq}</td>
          <td className="p-0 pl-[8px]">~</td>
          <td className="p-0">
            {msg.map((m, k) =>
              typeof m === "string" ? (
                m
              ) : (
                <span key={k} className={m[1]}>
                  {m[0]}
                </span>
              )
            )}
          </td>
          <td className="p-0">{country}</td>
        </tr>
      ))}
    </tbody>
  </table>
);

const PaneHeader = () => (
  <div className="grid h-[17px] grid-cols-[44px_28px_33px_35px_27px_1fr] items-center bg-[#a9a9a9] font-['Liberation_Mono','Noto_Sans_CJK_JP',monospace] text-[11px] leading-none text-[#111]">
    <span className="text-right">UTC&nbsp;</span>
    <span className="text-right">dB</span>
    <span className="text-right">DT</span>
    <span className="text-right">Freq</span>
    <span />
    <span className="text-[10px]">メッセージ</span>
  </div>
);

const MENU = ["ファイル", "コンフィグレーション", "表示", "モード", "デコード", "保存", "ツール", "ヘルプ"];

const Meter = () => (
  <div className="h-[138px] w-[59px] border border-[#dcdcdc] border-t-[#a8a8a8] border-l-[#a8a8a8]">
    <svg className="size-full font-['Liberation_Sans',sans-serif]" viewBox="0 0 57 136" fontSize="10" fill="#111">
      <rect x="15" y="59" width="9" height="55" fill="#52a852" />
      <path d="M15 52v7l8-3.500Z" />
      <path
        d="M28 11.500H24.500V114.500H28M24.500 102.500H27M24.500 91.500H28M24.500 80.500H27M24.500 68.500H28M24.500 57.500H27M24.500 45.500H28M24.500 34.500H27M24.500 23.500H28"
        fill="none"
        stroke="#111"
      />
      <text x="29" y="27">80</text>
      <text x="29" y="49">60</text>
      <text x="29" y="72">40</text>
      <text x="29" y="95">20</text>
      <text x="29" y="118">0</text>
      <text x="8" y="130">48 dB</text>
    </svg>
  </div>
);

const StationPanel = () => (
  <div className="flex w-[222px] shrink-0 flex-col gap-[8px]">
    <div className="flex items-center">
      <Select value="15m" label="Band" className="h-[18px] w-[59px] bg-white" />
      <button className="ml-[6px] flex size-[18px] items-center justify-center rounded-full border border-[#8fa08f] bg-[#00ff00] font-['Liberation_Sans',sans-serif] text-[11px] font-bold">
        S
      </button>
      <div className="ml-[6px] flex h-[27px] flex-1 items-center justify-center bg-black font-['Liberation_Sans',sans-serif] text-[17px] text-[#d6d600]">
        21.090 000
      </div>
    </div>
    <div className="flex gap-[6px]">
      <Meter />
      <div className="flex flex-1 flex-col">
        <div className="grid grid-cols-[2fr_1fr] gap-x-[5px] gap-y-[5px] text-center">
          <label htmlFor="dxcall" className="bg-[#a0b0d8] leading-[19px]">
            DXコール
          </label>
          <label htmlFor="dxgrid" className="bg-[#a0b0d8] leading-[19px] whitespace-nowrap">
            DXグリッド
          </label>
          <input id="dxcall" defaultValue="HS0ZOY" className={`${BOX} text-center`} />
          <input id="dxgrid" defaultValue="OK14" className={`${BOX} text-center`} />
        </div>
        <div className="flex gap-[27px] pl-[31px] leading-[22px]">
          <span>Az: 240</span>
          <span>3589 km</span>
        </div>
        <div className="flex gap-[7px]">
          <Btn className="h-[18px] flex-1">検索(L)</Btn>
          <Btn className="h-[18px] flex-1">追加</Btn>
        </div>
        <div className="mt-auto flex h-[46px] flex-col items-center justify-center bg-black font-['Liberation_Sans',sans-serif] text-[17px] leading-[18px] text-[#d6d600]">
          <span>2022 8 28</span>
          <span className="text-[16px]">04:28:30</span>
        </div>
      </div>
    </div>
  </div>
);

const TxPanel = () => (
  <div className="flex w-[179px] shrink-0 flex-col">
    <div className="flex gap-[14px] leading-[13px]">
      <Check label="Tx even/1st" checked />
      <Check label="送信周波数固定" checked />
    </div>
    <div className="mt-[6px] flex w-[76px] flex-col gap-[6px]">
      <Spin label="Tx" value="Tx  2360  Hz" className="h-[15px]" />
      <div className="flex gap-[7px]">
        <Btn className="h-[18px] flex-1">
          <svg className="h-[8px] w-[10px]" viewBox="0 0 10 8">
            <path d="M0 8 5 0 10 8Z" />
          </svg>
        </Btn>
        <Btn className="h-[18px] flex-1">
          <svg className="h-[8px] w-[10px]" viewBox="0 0 10 8">
            <path d="M0 0 5 8 10 0Z" />
          </svg>
        </Btn>
      </div>
      <Spin label="Rx" value="Rx  276  Hz" className="h-[15px]" />
      <Spin label="レポート" value="レポート -7" className="h-[15px]" />
    </div>
    <div className="mt-[5px] flex gap-[8px] leading-[13px]">
      <Check label="自動シーケンス" checked />
      <Check label="コール 1st" checked />
    </div>
    <div className="mt-[6px] ml-[44px] w-[85px] bg-[#ff0000] text-center leading-[10px] text-white">WW_DIGI</div>
  </div>
);

const TX_MESSAGES = [
  "HS0ZOY JA4JOE PM54",
  "HS0ZOY JA4JOE PM54",
  "HS0ZOY JA4JOE R PM54",
  "HS0ZOY JA4JOE RR73",
  "HS0ZOY JA4JOE 73",
  "CQ WW JA4JOE PM54",
];

const TabEar = ({ n, active }) => (
  <button className="block">
    <svg className="block h-[25px] w-[13px]" viewBox="0 0 13 25" fontSize="9" fill="#111">
      <path d="M13 .5 4 3.500Q.8 5 .8 8V17Q.8 20 4 21.500L13 24.500Z" fill={active ? "#f9f9f9" : "#efefef"} />
      <path d="M13 .5 4 3.500Q.8 5 .8 8V17Q.8 20 4 21.500L13 24.500" fill="none" stroke="#333" />
      <text transform="translate(4 10) rotate(90)">{n}</text>
    </svg>
  </button>
);

const MessagePanel = () => (
  <div className="flex min-w-0 flex-1">
    <div className="w-[12px] shrink-0">
      <TabEar n="1" active />
      <TabEar n="2" />
    </div>
    <div className="min-w-0 flex-1 border border-[#e6e6e6] bg-[#f9f9f9] px-[11px] pt-[11px] pb-[9px]">
      <div className="grid grid-cols-[1fr_38px_45px] items-center gap-y-[6px]">
        <Btn className="h-[18px]">標準メッセージ生成</Btn>
        <span className="text-center">次</span>
        <span className="text-center">送信</span>
        {TX_MESSAGES.map((m, i) => (
          <React.Fragment key={i}>
            {i === 4 ? (
              <Select value={m} label={`Tx ${i + 1} message`} className="h-[16px] bg-white" />
            ) : (
              <input
                defaultValue={m}
                disabled={i === 0}
                aria-label={`Tx ${i + 1} message`}
                className="h-[16px] min-w-0 border border-[#ebebeb] border-b-[#8a8a8a] bg-[#f9f9f9] px-[1px] leading-none disabled:border-b-[#e4e4e4] disabled:text-[#999]"
              />
            )}
            <input
              type="radio"
              name="next"
              aria-label={`次 Tx ${i + 1}`}
              defaultChecked={i === 5}
              className="mx-auto size-[11px] appearance-none rounded-full border border-[#7d7d7d] bg-[#fbfbfb] checked:border-4 checked:border-[#0a62b8]"
            />
            <Btn className={i === 0 ? "h-[15px] text-[#999]" : "h-[15px]"}>Tx {i + 1}</Btn>
          </React.Fragment>
        ))}
      </div>
    </div>
  </div>
);

const PowerSlider = () => (
  <div className="flex w-[33px] shrink-0 flex-col items-center gap-[13px] pt-[9px] pl-[2px]">
    <label htmlFor="power" className="leading-[14px]">
      出力
    </label>
    <div className="flex h-[139px] gap-[2px]">
      <input
        id="power"
        type="range"
        defaultValue="69"
        className="h-full w-[16px] appearance-none bg-[linear-gradient(to_right,transparent_6px,#d4d4d4_6px,#e8e8e8_10px,transparent_10px)] [direction:rtl] [writing-mode:vertical-lr] [&::-webkit-slider-thumb]:h-[10px] [&::-webkit-slider-thumb]:w-[16px] [&::-webkit-slider-thumb]:appearance-none [&::-webkit-slider-thumb]:bg-[#0078d7] [&::-webkit-slider-thumb]:[clip-path:polygon(0_0,70%_0,100%_50%,70%_100%,0_100%)]"
      />
      <div className="flex flex-col justify-between py-[4px]">
        {Array.from({ length: 10 }, (_, i) => (
          <span key={i} className="h-px w-[4px] bg-[#a8a8a8]" />
        ))}
      </div>
    </div>
  </div>
);

const ACTIONS = ["QSOをログ(Q)", "停止(S)", "モニター(M)", "消去(E)", "デコード(D)", "送信許可(n)", "送信停止(H)", "チューン(T)"];

const SUNKEN = "flex h-[16px] items-center justify-center border-t border-l border-[#b0b0b0] whitespace-nowrap";

const MainWindow = () => (
  <section className="absolute top-[350px] right-[2px] left-[469px] rounded-t-[7px] bg-[#efefef] text-[10px] text-[#111] shadow-[0_0_6px_rgba(0,0,0,0.5)]">
    <div className="overflow-hidden rounded-t-[7px]">
      <TitleBar title="WSJT-X   v2.5.4   by K1JT, G4WJS, K9AN, and IV3NWV" className="h-[25px] text-[#8f8f8f]" />
      <nav className="flex h-[16px] items-center gap-[12px] bg-white pl-[7px] text-[9px] text-[#808080]">
        {MENU.map((m) => (
          <button key={m}>{m}</button>
        ))}
      </nav>
    </div>

    <div className="grid grid-cols-2 gap-[5px] px-[10px] pt-[7px]">
      <section>
        <h2 className="text-center leading-[15px]">バンド状況</h2>
        <div className="mt-[2px]">
          <PaneHeader />
        </div>
        <div className="mt-[6px] flex h-[198px] border border-[#e2e2e2] border-b-[#8c8c8c] bg-white pl-[3px]">
          <div className="min-w-0 flex-1">
            <div className="flex h-[3px] bg-[#ff6666]">
              <div className="ml-[211px] w-[41px] bg-[#ff0000]" />
              <div className="ml-[5px] w-[13px] bg-[#ff7cc0]" />
            </div>
            <Decodes rows={BAND_ROWS} className="h-[191px]" />
          </div>
          <div className="ml-[5px] flex w-[13px] items-end justify-center bg-[#f0f0f0] pb-[14px]">
            <div className="h-[16px] w-[2px] bg-[#8a8a8a]" />
          </div>
        </div>
      </section>
      <section>
        <h2 className="text-center leading-[15px]">受信周波数</h2>
        <div className="mt-[2px]">
          <PaneHeader />
        </div>
        <div className="mt-[6px] flex h-[198px] flex-col border border-[#e2e2e2] border-b-[#8c8c8c] bg-[#f0f0f0]">
          <div className="flex">
            <div className="flex h-[184px] min-w-0 flex-1 flex-col justify-end overflow-hidden bg-white pr-[5px] pl-[3px]">
              <Decodes rows={RX_ROWS} className="h-[191px] shrink-0" />
            </div>
            <div className="flex w-[13px] items-end justify-center pb-[14px]">
              <div className="h-[16px] w-[2px] bg-[#8a8a8a]" />
            </div>
          </div>
          <div className="mt-[6px] mr-[76px] ml-[14px] h-[2px] bg-[#8a8a8a]" />
        </div>
      </section>
    </div>

    <div className="mt-[6px] flex h-[19px] gap-[7px] pr-[6px] pl-[10px]">
      <Check label="CQのみ" className="w-[50px]" />
      {ACTIONS.map((a, i) => (
        <Btn key={a} className={i === 2 ? "min-w-0 flex-1 border-[#1d6b1d]! bg-[#00ff00]!" : "min-w-0 flex-1"}>
          {a}
        </Btn>
      ))}
      <Check label="メニュー" checked className="w-[53px]" />
    </div>

    <div className="mt-[5px] flex h-[176px] pl-[10px]">
      <div className="pt-[2px]">
        <StationPanel />
      </div>
      <div className="pl-[5px]">
        <TxPanel />
      </div>
      <MessagePanel />
      <PowerSlider />
      <div className="w-[6px]" />
    </div>

    <footer className="mt-[11px] flex h-[17px] gap-[5px] pl-[2px]">
      <span className="flex h-[16px] w-[85px] items-center justify-center bg-[#00ff00]">受信中</span>
      <span className={`${SUNKEN} w-[68px]`}>IC-7300</span>
      <span className="flex h-[16px] w-[68px] items-center justify-center bg-[#ff6699]">FT8</span>
      <span className={`${SUNKEN} w-[154px]`}>最終送信: HS0ZOY JA4JOE RR73</span>
      <span className={`${SUNKEN} w-[25px]`}>15</span>
      <span className="w-[6px] border-r border-[#cfcfcf]" />
      <div className="ml-auto flex gap-[3px]">
        <div className="h-[15px] w-[135px] border border-[#bcbcbc] bg-[#e6e6e6]" />
        <span className="flex items-center border-r border-[#cfcfcf] pr-[3px]">0/15</span>
        <span className="flex items-center">WD:5m</span>
        <svg className="mt-auto size-[9px]" viewBox="0 0 9 9" fill="#b0b0b0">
          <path d="M6 0h2v2H6zM3 3h2v2H3zM6 3h2v2H6zM0 6h2v2H0zM3 6h2v2H3zM6 6h2v2H6z" />
        </svg>
      </div>
    </footer>
  </section>
);

const App = () => (
  <main className="relative h-screen overflow-hidden bg-[#0546cf] font-['Noto_Sans_CJK_JP',sans-serif] [font-feature-settings:'palt']">
    <Wallpaper />
    <WideGraph />
    <AlertWindow />
    <Callsigns />
    <MainWindow />
    <ContestLog />
    <LogQso />
  </main>
);

export default App;
